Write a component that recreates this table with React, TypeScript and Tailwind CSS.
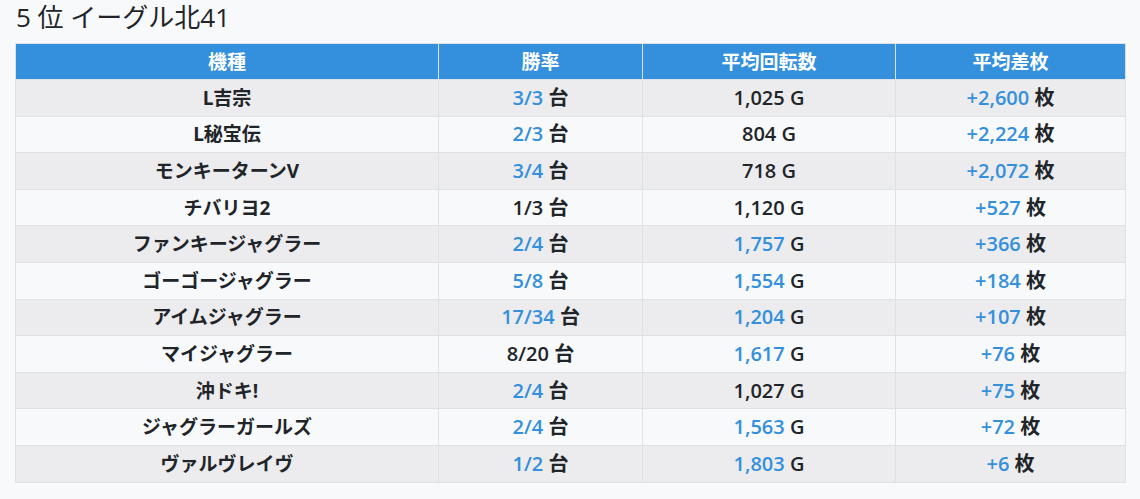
import React from 'react';

type Row = { name: string; win: string; winBlue: boolean; spins: string; spinsBlue: boolean; diff: string };

const rows: Row[] = [
  { name: 'L吉宗', win: '3/3', winBlue: true, spins: '1,025', spinsBlue: false, diff: '+2,600' },
  { name: 'L秘宝伝', win: '2/3', winBlue: true, spins: '804', spinsBlue: false, diff: '+2,224' },
  { name: 'モンキーターンV', win: '3/4', winBlue: true, spins: '718', spinsBlue: false, diff: '+2,072' },
  { name: 'チバリヨ2', win: '1/3', winBlue: false, spins: '1,120', spinsBlue: false, diff: '+527' },
  { name: 'ファンキージャグラー', win: '2/4', winBlue: true, spins: '1,757', spinsBlue: true, diff: '+366' },
  { name: 'ゴーゴージャグラー', win: '5/8', winBlue: true, spins: '1,554', spinsBlue: true, diff: '+184' },
  { name: 'アイムジャグラー', win: '17/34', winBlue: true, spins: '1,204', spinsBlue: true, diff: '+107' },
  { name: 'マイジャグラー', win: '8/20', winBlue: false, spins: '1,617', spinsBlue: true, diff: '+76' },
  { name: '沖ドキ!', win: '2/4', winBlue: true, spins: '1,027', spinsBlue: false, diff: '+75' },
  { name: 'ジャグラーガールズ', win: '2/4', winBlue: true, spins: '1,563', spinsBlue: true, diff: '+72' },
  { name: 'ヴァルヴレイヴ', win: '1/2', winBlue: true, spins: '1,803', spinsBlue: true, diff: '+6' },
];

const font = { fontFamily: '"Open Sans", "Noto Sans CJK JP", sans-serif' };

function Cell({ value, blue, unit }: { value: string; blue: boolean; unit: string }) {
  return (
    <td className="border border-[#dee2e6] text-center text-[20px] font-semibold">
      <span className={blue ? 'text-[#3490dc]' : 'text-[#212529]'}>{value}</span> {unit}
    </td>
  );
}

export default function App() {
  return (
    <div className="min-h-[499px] w-[1140px] bg-[#f8f9fb] text-[#212529]" style={font}>
      <h2 className="px-4 text-[26px] leading-[35px] font-normal text-[#212529]">5 位 イーグル北41</h2>
      <div className="pl-[15px] pt-[8px]">
        <table className="w-[1110px] table-fixed border-collapse">
          <colgroup>
            <col className="w-[423px]" />
            <col className="w-[204px]" />
            <col className="w-[253px]" />
            <col className="w-[230px]" />
          </colgroup>
          <thead>
            <tr className="h-[36px] bg-[#3490dc] text-white text-[19px] leading-[24px] font-bold">
              <th className="border border-[#dee2e6]">機種</th>
              <th className="border border-[#dee2e6]">勝率</th>
              <th className="border border-[#dee2e6]">平均回転数</th>
              <th className="border border-[#dee2e6]">平均差枚</th>
            </tr>
          </thead>
          <tbody>
            {rows.map((r, i) => (
              <tr key={i} className={`h-[36.6px] leading-[24px] ${i % 2 === 0 ? 'bg-[#ececee]' : 'bg-[#f8f9fb]'}`}>
                <td className="border border-[#dee2e6] text-center text-[19px] font-bold">{r.name}</td>
                <Cell value={r.win} blue={r.winBlue} unit="台" />
                <Cell value={r.spins} blue={r.spinsBlue} unit="G" />
                <Cell value={r.diff} blue={true} unit="枚" />
              </tr>
            ))}
          </tbody>
        </table>
      </div>
    </div>
  );
}
